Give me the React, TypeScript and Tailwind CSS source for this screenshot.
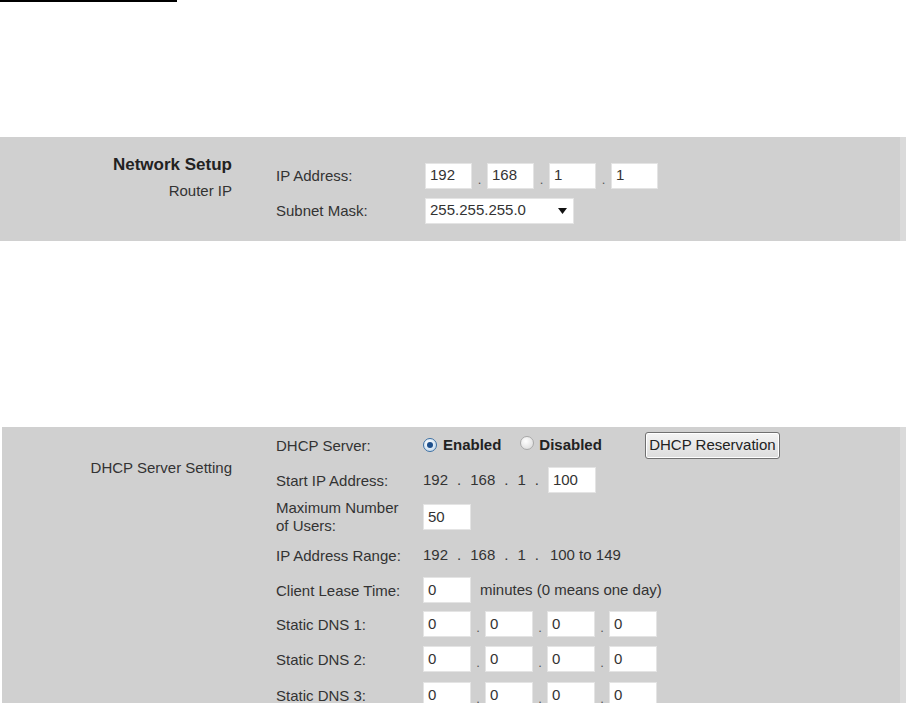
import type { ReactNode } from "react";

const font = { fontFamily: '"Liberation Sans", Arial, sans-serif' };

function Box({ value, w = "w-[48px]" }: { value: string; w?: string }) {
  return (
    <div className={`${w} h-[26px] bg-white border border-[#e4e4e4] flex items-center pl-[4px] text-[15px] text-[#333]`}>
      {value}
    </div>
  );
}

function Dot({ w = "w-[14px]" }: { w?: string }) {
  return <div className={`${w} h-[26px] flex items-end justify-center pb-[3px] text-[13px] leading-none text-[#555]`}>.</div>;
}

function IpBoxes({ values, w, gap }: { values: string[]; w?: string; gap?: string }) {
  return (
    <div className="flex items-center">
      {values.map((v, i) => (
        <div key={i} className="flex items-center">
          {i > 0 && <Dot w={gap} />}
          <Box value={v} w={w} />
        </div>
      ))}
    </div>
  );
}

function Row({ label, h, children, labelW = "w-[147px]" }: { label: ReactNode; h: string; children?: ReactNode; labelW?: string }) {
  return (
    <div className={`flex items-center ${h}`}>
      <div className={`${labelW} shrink-0 text-[15px] leading-[19px] text-[#333]`}>{label}</div>
      {children}
    </div>
  );
}

function Radio({ on }: { on?: boolean }) {
  return (
    <span
      className={`inline-flex w-[14px] h-[14px] rounded-full items-center justify-center border ${
        on
          ? "border-[#3b6fa3] bg-[radial-gradient(circle_at_40%_35%,#ffffff,#b9d3ea)]"
          : "border-[#a9a9a9] bg-[radial-gradient(circle_at_40%_35%,#ffffff,#d6d6d6)]"
      }`}
    >
      {on && <span className="w-[6px] h-[6px] rounded-full bg-[#1d4f8c]" />}
    </span>
  );
}

function Dotted({ last }: { last: ReactNode }) {
  return (
    <div className="flex items-center gap-[9px] text-[15px]">
      <span>192</span>
      <span>.</span>
      <span>168</span>
      <span>.</span>
      <span>1</span>
      <span>.</span>
      {last}
    </div>
  );
}

export default function App() {
  return (
    <div className="w-[914px] h-[703px] bg-white overflow-hidden text-[#333]" style={font}>
      <div className="h-[2px] w-[177px] bg-black" />

      {/* Network Setup */}
      <div className="mt-[135px] w-[906px] bg-[#d0d0d0] border-r-[6px] border-[#dadada] flex">
        <div className="w-[232px] shrink-0 text-right pt-[19px]">
          <div className="text-[17px] font-bold leading-[18px] text-[#222]">Network Setup</div>
          <div className="mt-[8px] text-[15px] leading-[18px]">Router IP</div>
        </div>
        <div className="ml-[44px] pt-[21px] pb-[13px]">
          <Row label="IP Address:" h="h-[35px]" labelW="w-[149px]">
            <IpBoxes values={["192", "168", "1", "1"]} w="w-[47px]" gap="w-[15px]" />
          </Row>
          <Row label="Subnet Mask:" h="h-[35px]" labelW="w-[149px]">
            <div className="w-[149px] h-[26px] bg-white border border-[#e4e4e4] flex items-center justify-between pl-[4px] pr-[6px] text-[15px]">
              <span>255.255.255.0</span>
              <svg width="9" height="6" viewBox="0 0 9 6">
                <path d="M0 0 H9 L4.5 6 Z" fill="#111" />
              </svg>
            </div>
          </Row>
        </div>
      </div>

      {/* DHCP */}
      <div className="mt-[186px] ml-[2px] w-[904px] h-[300px] bg-[#d0d0d0] border-r-[6px] border-[#dadada] flex">
        <div className="w-[230px] shrink-0 text-right pt-[32px] text-[15px] leading-[18px]">
          <div>DHCP Server Setting</div>
          <div className="mt-[228px]">Time Setting</div>
        </div>
        <div className="ml-[44px]">
          <Row label="DHCP Server:" h="h-[36px]">
            <div className="flex items-center text-[15px] font-bold text-[#222]">
              <Radio on />
              <span className="ml-[6px]">Enabled</span>
              <span className="ml-[19px]">
                <Radio />
              </span>
              <span className="ml-[5px]">Disabled</span>
              <button className="ml-[43px] h-[27px] w-[135px] rounded-[3px] border border-[#707070] bg-gradient-to-b from-[#f4f4f4] to-[#dcdcdc] text-[15px] font-normal text-[#222] shadow-[inset_0_0_0_1px_#ffffff]">
                DHCP Reservation
              </button>
            </div>
          </Row>
          <Row label="Start IP Address:" h="h-[34px]">
            <Dotted last={<Box value="100" />} />
          </Row>
          <Row
            h="h-[40px]"
            label={
              <div className="leading-[18px]">
                Maximum Number
                <br />
                of Users:
              </div>
            }
          >
            <Box value="50" />
          </Row>
          <Row label="IP Address Range:" h="h-[36px]">
            <Dotted last={<span className="ml-[2px]">100 to 149</span>} />
          </Row>
          <Row label="Client Lease Time:" h="h-[34px]">
            <Box value="0" />
            <span className="ml-[9px] text-[15px]">minutes (0 means one day)</span>
          </Row>
          <Row label="Static DNS 1:" h="h-[34px]">
            <IpBoxes values={["0", "0", "0", "0"]} />
          </Row>
          <Row label="Static DNS 2:" h="h-[36px]">
            <IpBoxes values={["0", "0", "0", "0"]} />
          </Row>
          <Row label="Static DNS 3:" h="h-[36px]">
            <IpBoxes values={["0", "0", "0", "0"]} />
          </Row>
        </div>
      </div>
    </div>
  );
}
